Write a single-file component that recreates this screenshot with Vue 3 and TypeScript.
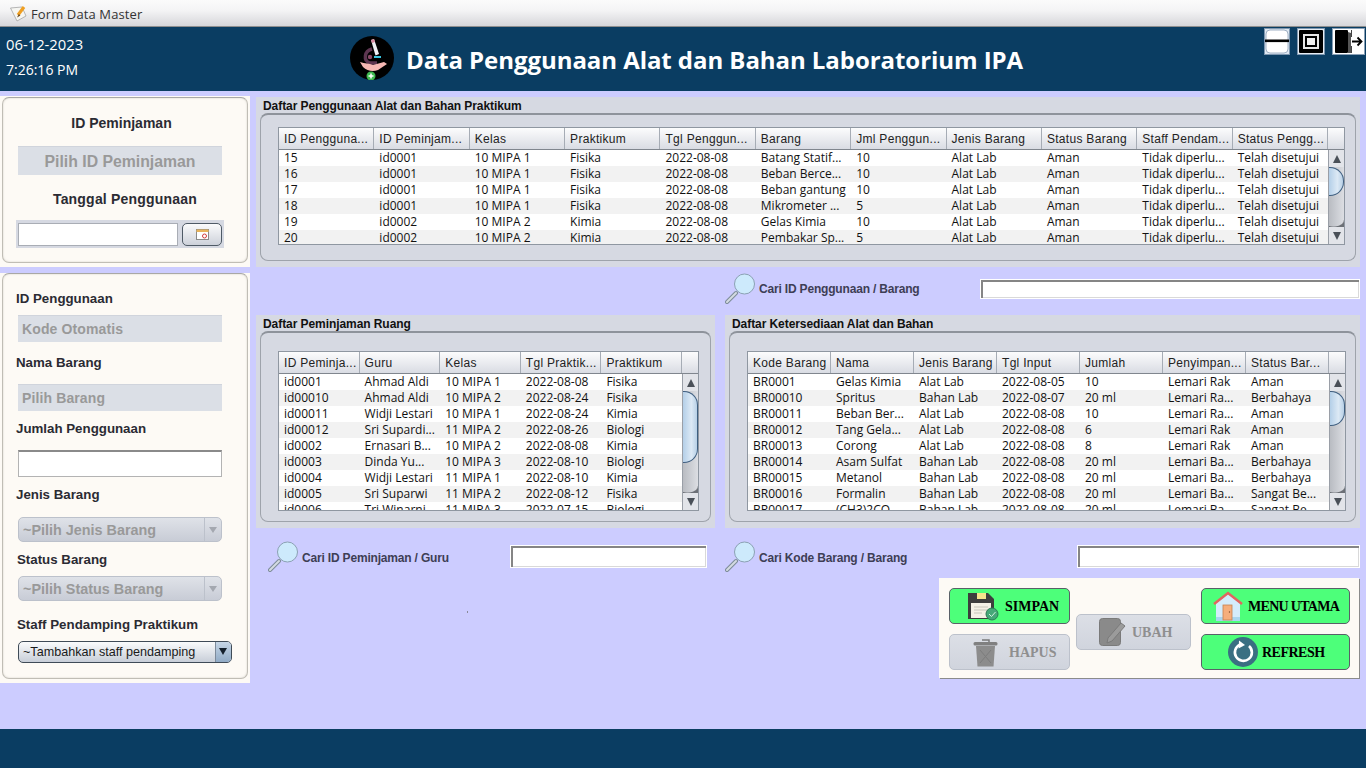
<template>
  <div class="window">
    <div class="titlebar">
      <svg class="title-icon" width="18" height="18" viewBox="0 0 18 18">
        <path d="M0.5 3 L7 16 L16 11 L12 2 Z" fill="#f6f6f2" stroke="#a5a5a5" stroke-width="0.8" />
        <path d="M8 10 L14 2" stroke="#ef9f22" stroke-width="3.2" />
        <path d="M8.8 9 L7 12.5 L10.4 10.6 Z" fill="#6a4a20" />
      </svg>
      <span>Form Data Master</span>
    </div>

    <header class="topbar">
      <div class="clock">
        <div class="clock-date">06-12-2023</div>
        <div>7:26:16 PM</div>
      </div>
      <svg class="logo" width="44" height="44" viewBox="0 0 44 44">
        <circle cx="22" cy="22" r="22" fill="#000" />
        <path d="M21 4 L24 3 L29 18 L25.5 19.5 Z" fill="#eef0f4" />
        <path d="M21 4 L24 3 L25 6 L22 7 Z" fill="#d88aa0" />
        <path d="M22 13 C14 15 13 25 20 27 L27 27" fill="none" stroke="#5d3550" stroke-width="3.4" />
        <rect x="24" y="20" width="7" height="2" fill="#38c6e0" />
        <circle cx="20" cy="21" r="2.2" fill="#8a4a68" />
        <path d="M10 26 C15 28 19 27 23 29 L34 26 L37 28 L28 34 C23 36 17 35 13 31 Z" fill="#f6b8b4" />
        <circle cx="21" cy="40" r="4.5" fill="#3fb950" />
        <path d="M21 37.5 V42.5 M18.5 40 H23.5" stroke="#fff" stroke-width="1.5" />
      </svg>
      <h1 class="app-title">Data Penggunaan Alat dan Bahan Laboratorium IPA</h1>
      <div class="window-buttons">
        <button class="win-btn" type="button" aria-label="Minimize">
          <svg width="26" height="27" viewBox="0 0 26 27">
            <rect x="0.5" y="0.5" width="25" height="26" fill="#dfe8f2" stroke="#7e97b0" />
            <rect x="2" y="2" width="22" height="23" rx="4" fill="#fff" stroke="#8aa0b6" stroke-width="0.8" />
            <rect x="1" y="11.5" width="24" height="2.6" fill="#000" />
          </svg>
        </button>
        <button class="win-btn" type="button" aria-label="Maximize">
          <svg width="28" height="27" viewBox="0 0 28 27">
            <rect x="0.5" y="0.5" width="27" height="26" fill="#e6edf4" stroke="#7e97b0" />
            <rect x="2" y="2" width="24" height="23" rx="1" fill="#000" />
            <rect x="6" y="6" width="16" height="15" fill="#e8e8e8" />
            <rect x="8" y="8" width="12" height="11" fill="#000" />
            <rect x="10" y="10" width="8" height="7" fill="#f2f2f2" />
          </svg>
        </button>
        <button class="win-btn" type="button" aria-label="Keluar">
          <svg width="33" height="27" viewBox="0 0 33 27">
            <rect x="0.5" y="0.5" width="32" height="26" fill="#fff" stroke="#8aa0b6" />
            <rect x="3" y="2" width="13" height="23" rx="1" fill="#000" />
            <path d="M16 4 L19 5 V25 H16 Z" fill="#555" />
            <path d="M19.5 2 V9 M19.5 18 V25" stroke="#444" />
            <path d="M20 13.5 H29 M25.5 9.5 L29.5 13.5 L25.5 17.5" fill="none" stroke="#000" stroke-width="1.8" />
          </svg>
        </button>
      </div>
    </header>

    <main class="content">
      <aside class="side">
        <section class="card card-top">
          <div class="card-inner">
            <div class="label label-center mt-16">ID Peminjaman</div>
            <div class="readonly readonly-big mt-14">Pilih ID Peminjaman</div>
            <div class="label label-center label-date mt-15">Tanggal Penggunaan</div>
            <div class="date-group mt-12">
              <input class="date-input" type="text" aria-label="Tanggal Penggunaan" />
              <button class="date-btn" type="button" aria-label="Pilih tanggal">
                <svg width="13" height="11" viewBox="0 0 13 11">
                  <rect x="0.5" y="0.5" width="12" height="10" fill="#fff" stroke="#8a8a8a" />
                  <rect x="0.5" y="0.5" width="12" height="2.5" fill="#e8b35a" />
                  <circle cx="8.5" cy="7" r="2" fill="none" stroke="#d23c3c" />
                </svg>
              </button>
            </div>
          </div>
        </section>

        <section class="card card-form">
          <div class="card-inner">
            <div class="label field mt-15">ID Penggunaan</div>
            <div class="readonly field-box mt-8">Kode Otomatis</div>
            <div class="label field mt-11">Nama Barang</div>
            <div class="readonly field-box mt-13">Pilih Barang</div>
            <div class="label field mt-8">Jumlah Penggunaan</div>
            <input class="plain-input mt-13" type="text" aria-label="Jumlah Penggunaan" />
            <div class="label field mt-8">Jenis Barang</div>
            <div class="combo mt-14">
              <span>~Pilih Jenis Barang</span>
              <i class="combo-arrow"></i>
            </div>
            <div class="label field field-alt mt-8">Status Barang</div>
            <div class="combo mt-8">
              <span>~Pilih Status Barang</span>
              <i class="combo-arrow"></i>
            </div>
            <div class="label field field-alt mt-14">Staff Pendamping Praktikum</div>
            <div class="select mt-8">
              <span>~Tambahkan staff pendamping</span>
              <i class="select-arrow"></i>
            </div>
          </div>
        </section>
      </aside>

      <div class="workspace">
        <template v-for="panel in panels" :key="panel.id">
          <section class="panel" :class="`panel-${panel.id}`">
            <h2 class="panel-title">{{ panel.title }}</h2>
            <div class="panel-box">
              <div class="table">
                <div class="table-head">
                  <div class="head-row" :style="{ gridTemplateColumns: `repeat(${panel.columns.length}, 1fr)` }">
                    <div v-for="col in panel.columns" :key="col" class="head-cell">{{ col }}</div>
                  </div>
                  <div class="head-corner"></div>
                </div>
                <div class="table-body">
                  <div class="rows">
                    <div
                      v-for="(row, i) in panel.rows"
                      :key="i"
                      class="row"
                      :class="{ zebra: i % 2 === 1 }"
                      :style="{ gridTemplateColumns: `repeat(${panel.columns.length}, 1fr)` }"
                    >
                      <div v-for="(cell, c) in row" :key="c" class="cell">{{ cell }}</div>
                    </div>
                  </div>
                  <div class="scrollbar">
                    <div class="scroll-btn"><i class="tri-up"></i></div>
                    <div class="scroll-track">
                      <div class="scroll-thumb" :style="{ height: `${panel.thumb}px` }"></div>
                    </div>
                    <div class="scroll-btn"><i class="tri-down"></i></div>
                  </div>
                </div>
              </div>
            </div>
          </section>

          <div class="search" :class="`search-${panel.id}`">
            <svg class="search-icon" width="31" height="31" viewBox="0 0 31 31">
              <path d="M11 20 L2 29" stroke="#7d8c98" stroke-width="4" stroke-linecap="round" />
              <path d="M11 20 L2 29" stroke="#d4dbe2" stroke-width="2" stroke-linecap="round" />
              <circle cx="19.5" cy="11" r="10" fill="#cdeafc" stroke="#8ba2b3" stroke-width="1" />
            </svg>
            <span class="search-label">{{ panel.search }}</span>
            <input class="search-input" type="text" :aria-label="panel.search" />
          </div>
        </template>

        <i class="speck"></i>

        <div class="actions">
          <button class="btn btn-on btn-save" type="button">
            <svg width="31" height="29" viewBox="0 0 31 29">
              <path d="M0 1 H20 L26 7 V27 H0 Z" fill="#3d3d3d" />
              <rect x="9" y="1" width="9" height="6" fill="#f4e28c" />
              <rect x="3" y="11" width="20" height="15" fill="#f4f1e6" />
              <path d="M6 15 H20 M6 18 H20 M6 21 H14" stroke="#c7c5ba" />
              <circle cx="24" cy="22" r="6" fill="#45a878" stroke="#2d7a56" />
              <path d="M21 22 L23.5 24.5 L27.5 20" fill="none" stroke="#d5f2e2" />
            </svg>
            <span>SIMPAN</span>
          </button>

          <button class="btn btn-off btn-edit" type="button">
            <svg width="27" height="28" viewBox="0 0 27 28">
              <rect x="0.5" y="0.5" width="21" height="27" rx="3" fill="#8a8a8a" stroke="#7a7a7a" />
              <path d="M9 20 L22 5 L26 8 L13 23 L8 25 Z" fill="#9b9b9b" stroke="#7a7a7a" />
            </svg>
            <span>UBAH</span>
          </button>

          <button class="btn btn-on btn-home" type="button">
            <svg width="30" height="31" viewBox="0 0 30 31">
              <path d="M3 12 L15 3 L27 12 V30 H3 Z" fill="#d4ecfb" />
              <rect x="3" y="26" width="24" height="4" fill="#a9d6ef" />
              <path d="M1 13 L15 2 L29 13" fill="none" stroke="#e2645f" stroke-width="2.5" />
              <rect x="10" y="14" width="9" height="15" fill="#f5ae7c" stroke="#c5814f" stroke-width="0.8" />
              <circle cx="16.5" cy="21" r="0.7" fill="#7a4a2a" />
            </svg>
            <span>MENU UTAMA</span>
          </button>

          <button class="btn btn-off btn-delete" type="button">
            <svg width="25" height="29" viewBox="0 0 25 29">
              <path d="M9 2 H16 V4" fill="none" stroke="#7a7a7a" stroke-width="1.5" />
              <rect x="0.5" y="4" width="24" height="3.5" rx="1.5" fill="#808080" />
              <path d="M3 8 H22 L20.5 28.5 H4.5 Z" fill="#8c8c8c" />
              <path d="M7 12 L18 25 M18 12 L7 25" stroke="#7c7c7c" />
            </svg>
            <span>HAPUS</span>
          </button>

          <button class="btn btn-on btn-refresh" type="button">
            <svg width="30" height="30" viewBox="0 0 30 30">
              <circle cx="15" cy="15" r="15" fill="#3a6f82" />
              <path d="M12 7.6 A8.5 8.5 0 1 0 21 9" fill="none" stroke="#fff" stroke-width="2.6" />
              <path d="M11 3.5 L17 8 L10.5 11.5 Z" fill="#fff" />
            </svg>
            <span>REFRESH</span>
          </button>
        </div>
      </div>
    </main>

    <footer class="bottombar"></footer>
  </div>
</template>

<script setup lang="ts">
interface TablePanel {
  id: string;
  title: string;
  search: string;
  thumb: number;
  columns: string[];
  rows: string[][];
}

const panels: TablePanel[] = [
  {
    id: 'usage',
    title: 'Daftar Penggunaan Alat dan Bahan Praktikum',
    search: 'Cari ID Penggunaan / Barang',
    thumb: 29,
    columns: [
      'ID Pengguna...',
      'ID Peminjam...',
      'Kelas',
      'Praktikum',
      'Tgl Penggun...',
      'Barang',
      'Jml Penggun...',
      'Jenis Barang',
      'Status Barang',
      'Staff Pendam...',
      'Status Pengg...'
    ],
    rows: [
      ['15', 'id0001', '10 MIPA 1', 'Fisika', '2022-08-08', 'Batang Statif...', '10', 'Alat Lab', 'Aman', 'Tidak diperlu...', 'Telah disetujui'],
      ['16', 'id0001', '10 MIPA 1', 'Fisika', '2022-08-08', 'Beban Berce...', '10', 'Alat Lab', 'Aman', 'Tidak diperlu...', 'Telah disetujui'],
      ['17', 'id0001', '10 MIPA 1', 'Fisika', '2022-08-08', 'Beban gantung', '10', 'Alat Lab', 'Aman', 'Tidak diperlu...', 'Telah disetujui'],
      ['18', 'id0001', '10 MIPA 1', 'Fisika', '2022-08-08', 'Mikrometer ...', '5', 'Alat Lab', 'Aman', 'Tidak diperlu...', 'Telah disetujui'],
      ['19', 'id0002', '10 MIPA 2', 'Kimia', '2022-08-08', 'Gelas Kimia', '10', 'Alat Lab', 'Aman', 'Tidak diperlu...', 'Telah disetujui'],
      ['20', 'id0002', '10 MIPA 2', 'Kimia', '2022-08-08', 'Pembakar Sp...', '5', 'Alat Lab', 'Aman', 'Tidak diperlu...', 'Telah disetujui']
    ]
  },
  {
    id: 'room',
    title: 'Daftar Peminjaman Ruang',
    search: 'Cari ID Peminjaman / Guru',
    thumb: 72,
    columns: ['ID Peminja...', 'Guru', 'Kelas', 'Tgl Praktik...', 'Praktikum'],
    rows: [
      ['id0001', 'Ahmad Aldi', '10 MIPA 1', '2022-08-08', 'Fisika'],
      ['id00010', 'Ahmad Aldi', '10 MIPA 2', '2022-08-24', 'Fisika'],
      ['id00011', 'Widji Lestari', '10 MIPA 1', '2022-08-24', 'Kimia'],
      ['id00012', 'Sri Supardi...', '11 MIPA 2', '2022-08-26', 'Biologi'],
      ['id0002', 'Ernasari B...', '10 MIPA 2', '2022-08-08', 'Kimia'],
      ['id0003', 'Dinda Yu...', '10 MIPA 3', '2022-08-10', 'Biologi'],
      ['id0004', 'Widji Lestari', '11 MIPA 1', '2022-08-10', 'Kimia'],
      ['id0005', 'Sri Suparwi', '11 MIPA 2', '2022-08-12', 'Fisika'],
      ['id0006', 'Tri Winarni', '11 MIPA 3', '2022-07-15', 'Biologi']
    ]
  },
  {
    id: 'stock',
    title: 'Daftar Ketersediaan Alat dan Bahan',
    search: 'Cari Kode Barang / Barang',
    thumb: 35,
    columns: ['Kode Barang', 'Nama', 'Jenis Barang', 'Tgl Input', 'Jumlah', 'Penyimpan...', 'Status Bar...'],
    rows: [
      ['BR0001', 'Gelas Kimia', 'Alat Lab', '2022-08-05', '10', 'Lemari Rak', 'Aman'],
      ['BR00010', 'Spritus', 'Bahan Lab', '2022-08-07', '20 ml', 'Lemari Ra...', 'Berbahaya'],
      ['BR00011', 'Beban Ber...', 'Alat Lab', '2022-08-08', '10', 'Lemari Ra...', 'Aman'],
      ['BR00012', 'Tang Gela...', 'Alat Lab', '2022-08-08', '6', 'Lemari Rak', 'Aman'],
      ['BR00013', 'Corong', 'Alat Lab', '2022-08-08', '8', 'Lemari Rak', 'Aman'],
      ['BR00014', 'Asam Sulfat', 'Bahan Lab', '2022-08-08', '20 ml', 'Lemari Ba...', 'Berbahaya'],
      ['BR00015', 'Metanol', 'Bahan Lab', '2022-08-08', '20 ml', 'Lemari Ba...', 'Berbahaya'],
      ['BR00016', 'Formalin', 'Bahan Lab', '2022-08-08', '20 ml', 'Lemari Ba...', 'Sangat Be...'],
      ['BR00017', '(CH3)2CO ...', 'Bahan Lab', '2022-08-08', '20 ml', 'Lemari Ba...', 'Sangat Be...']
    ]
  }
];
</script>

<style>
html,
body {
  margin: 0;
  background: #ccccff;
}
</style>

<style scoped>
.window {
  width: 1366px;
  height: 768px;
  display: flex;
  flex-direction: column;
  overflow: hidden;
  background: #ccccff;
  font-family: "Liberation Sans", Arial, sans-serif;
  color: #1c1c1c;
}

.titlebar {
  height: 27px;
  flex: none;
  box-sizing: border-box;
  display: flex;
  align-items: center;
  padding: 2px 0 0 10px;
  gap: 3px;
  background: linear-gradient(#fbfbfb 0%, #f4f4f5 40%, #d6d6da 100%);
  border-bottom: 1px solid #8e8e8e;
  font-family: "Open Sans", sans-serif;
  font-size: 13px;
  letter-spacing: 0.12px;
  color: #333;
}

.topbar {
  height: 64px;
  flex: none;
  display: flex;
  align-items: center;
  background: #0a3d62;
  color: #fff;
}

.clock {
  width: 344px;
  padding-left: 6px;
  font-family: "Open Sans", sans-serif;
  font-size: 14px;
  line-height: 26px;
  margin-top: -4px;
}

.clock-date {
  font-size: 14.8px;
}

.logo {
  flex: none;
  margin-top: -2px;
}

.app-title {
  margin: 0 0 0 12px;
  font-family: "Open Sans", sans-serif;
  font-size: 24px;
  font-weight: 700;
  letter-spacing: -0.06px;
  white-space: nowrap;
}

.window-buttons {
  margin-left: auto;
  align-self: flex-start;
  display: flex;
  gap: 7px;
  padding: 1px 1px 0 0;
}

.win-btn {
  display: block;
  padding: 0;
  border: 0;
  background: none;
  height: 27px;
}

.win-btn svg {
  display: block;
}

.content {
  flex: 1;
  display: flex;
  min-height: 0;
}

.side {
  width: 250px;
  flex: none;
  padding-top: 5px;
  display: flex;
  flex-direction: column;
  gap: 6px;
}

.card {
  box-sizing: border-box;
  padding: 1px 2px 4px;
  background: #fdfaf5;
}

.card-top {
  height: 171px;
}

.card-form {
  height: 410px;
  padding-top: 0;
}

.card-inner {
  box-sizing: border-box;
  height: 100%;
  display: flex;
  flex-direction: column;
  border: 1px solid #c0bdb5;
  border-top-color: #a9a8a6;
  border-radius: 7px;
  box-shadow: inset 0 0 2px rgba(120, 120, 110, 0.35);
}

.label {
  height: 18px;
  line-height: 18px;
  font-size: 14px;
  font-weight: 700;
  color: #2b2b33;
  flex: none;
}

.label-center {
  text-align: center;
  padding-right: 7px;
}

.label-date {
  padding-right: 0;
  letter-spacing: 0.2px;
}

.field {
  margin-left: 13px;
  font-size: 13.3px;
  line-height: 20px;
}

.field-alt {
  margin-left: 14px;
}

.mt-8 { margin-top: 8px; }
.mt-11 { margin-top: 11px; }
.mt-12 { margin-top: 12px; }
.mt-13 { margin-top: 13px; }
.mt-14 { margin-top: 14px; }
.mt-15 { margin-top: 15px; }
.mt-16 { margin-top: 16px; }

.readonly {
  box-sizing: border-box;
  flex: none;
  width: 204px;
  margin-left: 15px;
  background: #dbdfe6;
  border-top: 1px solid #d0d4dc;
  color: #999;
  font-weight: 700;
}

.readonly-big {
  height: 29px;
  line-height: 29px;
  font-size: 15.8px;
  text-align: center;
}

.field-box {
  height: 27px;
  line-height: 26px;
  padding-left: 4px;
  font-size: 14px;
  letter-spacing: 0.12px;
}

.date-group {
  box-sizing: border-box;
  flex: none;
  width: 208px;
  height: 28px;
  margin-left: 13px;
  padding: 3px 2px 2px;
  display: flex;
  gap: 4px;
  background: #d6d9e2;
}

.date-input {
  box-sizing: border-box;
  width: 160px;
  height: 23px;
  margin: 0;
  background: #fff;
  border: 1px solid #a9adb5;
  outline: 0;
}

.date-btn {
  box-sizing: border-box;
  width: 40px;
  height: 23px;
  padding: 0;
  display: flex;
  align-items: center;
  justify-content: center;
  border: 1px solid #4f5a66;
  border-radius: 5px;
  background: linear-gradient(#fbfbfc, #cdd1da);
}

.plain-input {
  box-sizing: border-box;
  flex: none;
  width: 204px;
  height: 27px;
  margin-left: 15px;
  background: #fff;
  border: 1px solid #b3b3b3;
  border-top: 2px solid #8a8a8a;
  outline: 0;
}

.combo {
  box-sizing: border-box;
  flex: none;
  width: 204px;
  height: 25px;
  margin-left: 15px;
  display: flex;
  align-items: center;
  justify-content: space-between;
  padding-left: 4px;
  border: 1px solid #bcc1cb;
  border-radius: 5px;
  background: linear-gradient(#dfe2e8, #c8ccd6);
  color: #999;
  font-size: 14.4px;
  font-weight: 700;
}

.combo-arrow {
  position: relative;
  width: 16px;
  height: 100%;
  border-left: 1px solid #bcc1cb;
}

.combo-arrow::after {
  content: "";
  position: absolute;
  left: 4px;
  top: 9px;
  border: 4px solid transparent;
  border-top: 6px solid #a4a8b0;
  border-bottom: 0;
}

.select {
  box-sizing: border-box;
  flex: none;
  width: 214px;
  height: 22px;
  margin-left: 15px;
  display: flex;
  align-items: center;
  justify-content: space-between;
  padding-left: 4px;
  border: 1px solid #3f4b57;
  border-radius: 5px;
  background: linear-gradient(#fafbfc, #c8ced8);
  font-size: 12.6px;
  color: #1a1a1a;
}

.select-arrow {
  position: relative;
  width: 15px;
  height: 100%;
  border-left: 1px solid #7d8b9b;
  border-radius: 0 4px 4px 0;
  background: linear-gradient(#c6d6e6, #91abc6);
}

.select-arrow::after {
  content: "";
  position: absolute;
  left: 3px;
  top: 6px;
  border: 4px solid transparent;
  border-top: 7px solid #14202c;
  border-bottom: 0;
}

.workspace {
  position: relative;
  width: 1104px;
  margin: 6px 0 0 6px;
  display: grid;
  grid-template-columns: 459px 635px;
  grid-template-rows: 170px 48px 213px 50px 101px;
  column-gap: 10px;
  align-content: start;
}

.speck {
  position: absolute;
  left: 211px;
  top: 514px;
  width: 1px;
  height: 2px;
  background: #8a8a9a;
}

.panel {
  box-sizing: border-box;
  display: flex;
  flex-direction: column;
  background: #d6d9e2;
  padding: 0 4px 6px;
}

.panel-usage {
  grid-column: 1 / 3;
  grid-row: 1;
}

.panel-room {
  grid-column: 1;
  grid-row: 3;
}

.panel-stock {
  grid-column: 2;
  grid-row: 3;
}

.panel-title {
  margin: 0;
  height: 16px;
  flex: none;
  padding-left: 3px;
  font-size: 12px;
  line-height: 18px;
  letter-spacing: -0.07px;
  font-weight: 700;
  color: #111;
}

.panel-box {
  flex: 1;
  min-height: 0;
  display: flex;
  box-sizing: border-box;
  border: 1px solid #9ea3ab;
  border-top: 2px solid #8e939b;
  border-radius: 8px;
  padding: 12px 10px 15px 17px;
}

.panel-room .panel-box {
  padding: 18px 11px 10px 17px;
}

.panel-stock .panel-box {
  padding: 18px 9px 10px 17px;
}

.table {
  flex: 1;
  min-width: 0;
  display: flex;
  flex-direction: column;
  border: 1px solid #8f97a1;
  background: #fff;
}

.table-head {
  height: 22px;
  flex: none;
  display: flex;
  box-sizing: border-box;
  border-bottom: 1px solid #80868e;
  background: linear-gradient(#fcfcfd, #d9dce3);
}

.head-row {
  flex: 1;
  min-width: 0;
  display: grid;
}

.head-cell {
  padding-left: 5px;
  border-right: 1px solid #a6acb5;
  font-size: 12px;
  line-height: 23px;
  letter-spacing: 0.3px;
  white-space: nowrap;
  overflow: hidden;
  color: #222;
}

.head-corner {
  width: 16px;
  flex: none;
}

.table-body {
  flex: 1;
  min-height: 0;
  display: flex;
}

.rows {
  flex: 1;
  min-width: 0;
  overflow: hidden;
}

.row {
  display: grid;
  height: 16px;
}

.row.zebra {
  background: #f2f2f2;
}

.cell {
  padding-left: 5px;
  font-family: "Open Sans", sans-serif;
  font-size: 12px;
  line-height: 16px;
  white-space: nowrap;
  overflow: hidden;
  color: #111;
}

.scrollbar {
  box-sizing: border-box;
  width: 16px;
  flex: none;
  display: flex;
  flex-direction: column;
  border-left: 1px solid #9a9fa7;
  background: #e3e5ea;
}

.scroll-btn {
  height: 17px;
  flex: none;
  display: flex;
  align-items: center;
  justify-content: center;
  background: #e2e4e9;
}

.tri-up,
.tri-down {
  width: 0;
  height: 0;
  border-left: 4px solid transparent;
  border-right: 4px solid transparent;
}

.tri-up {
  border-bottom: 8px solid #4a5058;
}

.tri-down {
  border-top: 8px solid #4a5058;
}

.scroll-track {
  position: relative;
  flex: 1;
  min-height: 0;
  background: linear-gradient(90deg, #b9bcc2, #dcdee3);
}

.scroll-track::after {
  content: "";
  position: absolute;
  left: 0;
  right: 0;
  bottom: 0;
  height: 7px;
  background: radial-gradient(ellipse 11px 7px at 30% 0, transparent 88%, #6c7076 100%);
}

.scroll-thumb {
  box-sizing: border-box;
  border: 1px solid #3f5f80;
  border-left: 0;
  border-radius: 0 14px 14px 0 / 0 14px 14px 0;
  background: linear-gradient(90deg, #b4cfe8, #dce9f5 60%, #b8d0e6);
}

.search {
  display: flex;
  align-items: center;
  align-self: start;
  height: 31px;
  margin-top: 6px;
}

.search-usage {
  grid-column: 2;
  grid-row: 2;
}

.search-room {
  grid-column: 1;
  grid-row: 4;
  margin-top: 13px;
  padding: 0 8px 0 12px;
}

.search-stock {
  grid-column: 2;
  grid-row: 4;
  margin-top: 13px;
}

.search-icon {
  flex: none;
}

.search-label {
  margin-left: 3px;
  font-size: 12px;
  font-weight: 700;
  letter-spacing: -0.18px;
  color: #3e3e55;
  white-space: nowrap;
}

.search-room .search-label,
.search-stock .search-label {
  margin-top: 2px;
}

.search-input {
  box-sizing: border-box;
  margin: 0 0 0 auto;
  background: #fff;
  border: 1px solid #fff;
  box-shadow: inset 2px 2px 0 #858585, inset -1px -1px 0 #d9d9d9;
  outline: 0;
  height: 20px;
  width: 380px;
}

.search-room .search-input {
  height: 23px;
  width: 197px;
}

.search-stock .search-input {
  height: 23px;
  width: 283px;
}

.actions {
  grid-column: 1 / 3;
  grid-row: 5;
  justify-self: end;
  width: 420px;
  height: 100px;
  margin-right: 1px;
  box-sizing: border-box;
  padding: 10px 0 0 10px;
  display: grid;
  grid-template-columns: 121px 6px 115px 10px 149px;
  grid-template-rows: 36px 36px;
  row-gap: 10px;
  background: #fdfaf5;
  box-shadow: 1px 1px 0 #8b8b8b;
}

.btn {
  box-sizing: border-box;
  padding: 0;
  display: flex;
  align-items: center;
  border-radius: 5px;
  font-family: "Liberation Serif", serif;
  font-size: 14px;
  font-weight: 700;
  white-space: nowrap;
}

.btn span {
  margin-top: 2px;
}

.btn-on {
  background: #4dff7a;
  border: 1px solid #5a6068;
  color: #000;
}

.btn-off {
  background: linear-gradient(#dcdfe6, #d0d4dd);
  border: 1px solid #bcc1cb;
  color: #8f8f8f;
}

.btn-save {
  grid-column: 1;
  grid-row: 1;
  padding-left: 18px;
  gap: 6px;
}

.btn-edit {
  grid-column: 3;
  grid-row: 1 / 3;
  align-self: start;
  height: 36px;
  margin-top: 26px;
  padding-left: 22px;
  gap: 6px;
}

.btn-home {
  grid-column: 5;
  grid-row: 1;
  padding-left: 11px;
  gap: 5px;
  letter-spacing: -0.7px;
}

.btn-delete {
  grid-column: 1;
  grid-row: 2;
  padding-left: 23px;
  gap: 11px;
}

.btn-refresh {
  grid-column: 5;
  grid-row: 2;
  padding-left: 26px;
  gap: 4px;
  letter-spacing: -0.5px;
}

.bottombar {
  height: 39px;
  flex: none;
  background: #0a3d62;
}
</style>
